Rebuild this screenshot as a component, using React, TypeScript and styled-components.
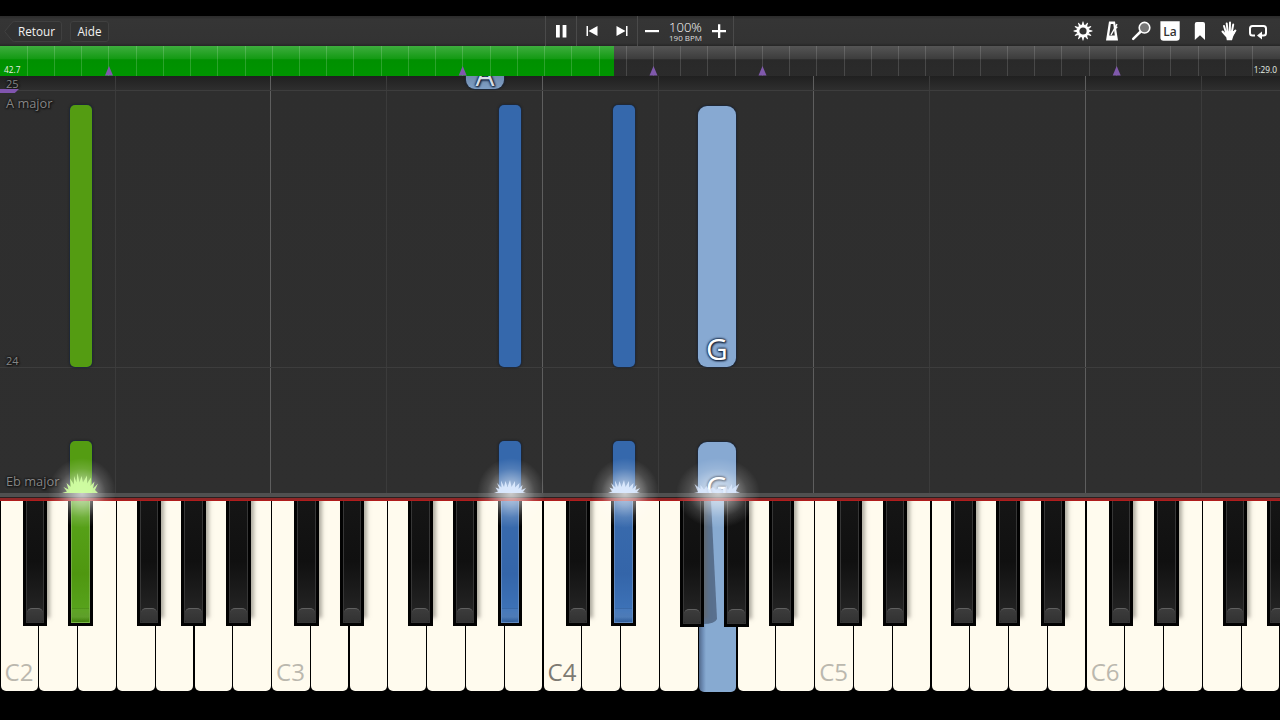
import React from "react";
import styled, { createGlobalStyle } from "styled-components";

const Global = createGlobalStyle`
  html, body { margin: 0; background: #000; }
  body { overflow: hidden; }
  * { box-sizing: border-box; }
`;

const Screen = styled.main`
  width: 1280px;
  height: 720px;
  padding-top: 16px;
  background: #000;
  display: flex;
  flex-direction: column;
  overflow: hidden;
  font-family: "Open Sans", "Noto Sans", sans-serif;
`;

const Toolbar = styled.header`
  height: 30px;
  flex: none;
  display: grid;
  grid-template-columns: 545px 189px 1fr;
  background: linear-gradient(#2b2b2b, #353535 12%, #333 90%, #262626);
  color: #fff;
`;

const Menu = styled.nav`
  display: flex;
  align-items: center;
  padding-left: 4px;
  gap: 8px;
`;

const MenuButton = styled.button`
  height: 21px;
  width: 39px;
  padding: 0;
  border: 1px solid #404040;
  border-radius: 3px;
  background: #313131;
  color: #f2f2f2;
  font: 11.7px "Open Sans", sans-serif;
`;

const BackButton = styled.button`
  height: 21px;
  width: 58px;
  padding: 0;
  border: 0;
  background: none;
  display: grid;
  place-items: center;
  color: #f2f2f2;
  font: 11.7px "Open Sans", sans-serif;
  svg, span { grid-area: 1 / 1; }
  span { padding-left: 7px; }
`;

const Transport = styled.div`
  display: grid;
  grid-template-columns: 31px 61px 96px;
  border-left: 1px solid #4a4a4a;
`;

const Group = styled.div<{ $gap?: number }>`
  display: flex;
  align-items: center;
  justify-content: center;
  gap: ${(p) => p.$gap ?? 0}px;
  border-right: 1px solid #4a4a4a;
`;

const Speed = styled.div`
  display: flex;
  flex-direction: column;
  align-items: center;
  width: 35px;
  padding-top: 2px;
  white-space: nowrap;
  strong { font: 300 13px/11px "Open Sans", sans-serif; color: #fff; }
  small { font: 8px/9px "Open Sans", sans-serif; color: #ddd; }
`;

const Tools = styled.div`
  display: flex;
  align-items: center;
  justify-content: flex-end;
  gap: 7.3px;
  padding-right: 10.7px;
`;

const Timeline = styled.div`
  flex: none;
  height: 30px;
  display: grid;
  grid-template: 30px / 1fr;
  background: linear-gradient(#555, #3d3d3d 42%, #292929 46%, #2b2b2b);
  overflow: hidden;
  > * { grid-area: 1 / 1; }
`;

const Progress = styled.div`
  width: 614px;
  height: 100%;
  background: linear-gradient(#3eae3e, #149a14 42%, #009000 46%, #009400);
`;

const Times = styled.div`
  display: flex;
  justify-content: space-between;
  align-items: flex-end;
  padding: 0 3px 1px 4px;
  font-size: 8.3px;
  line-height: 10px;
  color: #e6f0e6;
`;

const Stage = styled.div`
  position: relative;
  flex: 1;
`;

const Roll = styled.section`
  position: relative;
  height: 417px;
  display: grid;
  grid-template: 417px / 1280px;
  background: linear-gradient(#202020, #2e2e2e 14px, #2f2f2f);
  overflow: hidden;
`;

const Lanes = styled.div`
  grid-area: 1 / 1;
  margin-left: -0.4px;
  display: grid;
  grid-template-columns: repeat(4, 116.364px 155.151px) 116.364px 1fr;
`;

const Lane = styled.div<{ $octaveEnd?: boolean }>`
  border-right: 1px solid ${(p) => (p.$octaveEnd ? "#5e5e5e" : "#3b3b3b")};
`;

const Measures = styled.div`
  grid-area: 1 / 1;
  display: grid;
  grid-template-rows: 15px 277px 125px;
`;

const Measure = styled.div<{ $current?: boolean }>`
  display: flex;
  flex-direction: column;
  justify-content: ${(p) => (p.$current ? "flex-end" : "space-between")};
  padding: 0 0 ${(p) => (p.$current ? 4 : 0)}px 6px;
  border-bottom: ${(p) => (p.$current ? "0" : "1px solid #3d3d3d")};
`;

const Label = styled.span<{ $small?: boolean }>`
  font-size: ${(p) => (p.$small ? 11 : 12.8)}px;
  line-height: 16px;
  margin: ${(p) => (p.$small ? "auto 0 -2px" : "4px 0 0")};
  color: #868686;
  text-shadow: 0 0 2px #111, 0 0 2px #111, 1px 1px 2px #111;
`;

const SectionFlag = styled.i`
  position: absolute;
  left: 0;
  top: 13px;
  width: 19px;
  height: 4px;
  background: #8055ae;
  clip-path: polygon(0 0, 100% 0, 78% 100%, 0 100%);
`;

const Note = styled.div<{ $x: number; $y: number; $w: number; $h: number; $color: string; $cut?: boolean }>`
  position: absolute;
  left: ${(p) => p.$x}px;
  top: ${(p) => p.$y}px;
  width: ${(p) => p.$w}px;
  height: ${(p) => p.$h}px;
  display: flex;
  align-items: flex-end;
  justify-content: center;
  border-radius: ${(p) => (p.$w > 30 ? 9 : 5)}px;
  ${(p) => p.$cut && "border-bottom-left-radius: 0; border-bottom-right-radius: 0;"}
  background: ${(p) => p.$color};
  box-shadow: 0 0 0 1px #1c2a40aa, 0 0 2px 1px #1a1a1a88;
  overflow: hidden;
`;

const NoteName = styled.span<{ $drop?: number; $dim?: boolean }>`
  font-size: 30px;
  line-height: 36px;
  margin-bottom: ${(p) => -(p.$drop ?? 0)}px;
  color: ${(p) => (p.$dim ? "#d6dce4" : "#fff")};
  text-shadow: 0 0 2px #14233c, 0 0 2px #14233c, 1px 1px 2px #14233c, 0 0 3px #14233c;
`;

const Rail = styled.div`
  height: 8px;
  background: linear-gradient(#505050 0 4px, #2a2020 4px 5px, #8f2626 5px 7px, #b01c1c 7px);
`;

const Keyboard = styled.section`
  height: 191px;
  display: grid;
  grid-template: 191px / 1280px;
  background: #000;
  overflow: hidden;
  > * { grid-area: 1 / 1; }
`;

const WhiteKeys = styled.div`
  display: grid;
  grid-template-columns: repeat(33, 1fr);
`;

const WhiteKey = styled.div<{ $down?: boolean; $middle?: boolean }>`
  height: ${(p) => (p.$down ? 191 : 190)}px;
  margin: 0 0.6px;
  padding: 156px 0 0 4px;
  border-radius: 0 0 5px 5px;
  background: ${(p) =>
    p.$down ? "linear-gradient(90deg, #52698a, #6f8fb8 4px, #87aad1 7px, #87aad1)" : "#fffbee"};
  color: ${(p) => (p.$middle ? "#7d7a72" : "#bbb8ae")};
  font-size: 24px;
  line-height: 30px;
  white-space: nowrap;
`;

const BlackKeys = styled.div`
  display: grid;
  grid-template-columns: repeat(5, 271.515px);
`;

const Octave = styled.div`
  display: grid;
  grid-template-columns: 24.5px 24.5px 24.5px 24.5px 24.5px;
  column-gap: 20.3px;
  padding-left: 22.8px;
  > :nth-child(2) { margin-left: 0.8px; margin-right: -0.8px; }
  > :nth-child(n + 3) { margin-left: 24.2px; margin-right: -24.2px; }
`;

const BlackKey = styled.div<{ $lit?: boolean; $low?: boolean }>`
  height: ${(p) => (p.$low ? 126 : 125)}px;
  padding: 0 3px 3px;
  background: #020202;
  box-shadow: ${(p) => (p.$lit ? "none" : "4px -7px 4px -1px #69655b88")};
`;

const KeyTop = styled.div<{ $color?: string }>`
  height: 100%;
  display: flex;
  align-items: flex-end;
  border: 1px solid ${(p) => (p.$color ? "#ffffff33" : "#363636")};
  border-top: 0;
  background: ${(p) => p.$color ?? "linear-gradient(#151515, #101010 50%, #222 88%)"};
`;

const KeyLip = styled.div<{ $lit?: boolean }>`
  width: 100%;
  height: 14px;
  border-radius: ${(p) => (p.$lit ? "0 0 5px 5px" : "5px 5px 2px 2px")};
  border-top: 1px solid ${(p) => (p.$lit ? "transparent" : "#606060")};
  background: ${(p) => (p.$lit ? "linear-gradient(#ffffff0c, #ffffff1c 60%, #00000018)" : "linear-gradient(#3c3c3c, #323232)")};
`;

const PressShade = styled.svg`
  margin-left: 703px;
`;

const Flare = styled.svg<{ $x: number }>`
  position: absolute;
  left: ${(p) => p.$x - 50}px;
  top: 360px;
  pointer-events: none;
`;

const GREEN = "#549c12";
const BLUE = "#3568ac";
const PALE = "#87a9d2";
const GREEN_KEY = "linear-gradient(#5aa51c, #4f9710 60%, #57a21b 88%, #458c0b)";
const BLUE_KEY = "linear-gradient(#3a6cae, #3465a9 60%, #3d72b7 90%, #3466a8)";

// Black keys held down, by octave and position in the octave (C#, D#, F#, G#, A#).
const HELD: Record<string, string> = { "0-1": GREEN_KEY, "1-4": BLUE_KEY, "2-1": BLUE_KEY };

const flames = {
  green:
    "M31 57L36 55.5L32.5 51L37.5 53.5L35.5 47L40 51L39 42.5L43 48.5L43 40L45.5 46.5L46.5 37L48.5 46.5L50.5 40L52 46.5L56 39.5L56 47.5L60 41.5L59.5 50L63.5 45.5L62 52.5L67 47.5L64 54L67 57Z",
  blue:
    "M34 57L38 55.5L35.5 51.5L39.5 53L37 47L41.5 51.5L41 44.5L44 51L45.5 45L47.5 51L50 44L51.5 51L55 45L55 51.5L59.5 47L58.5 53L62.5 49L61.5 54L66 52L63 56L66 57Z",
  pale:
    "M27 57L31 56L27.5 48L33.5 53L33.5 49L37 53.5L39.5 50L42 54L46 51L49 54L53 51L55 54L59.5 50L61 54L65 48L65 53L72.5 47.5L69 55L73 57Z",
};

const Flame = ({ x, kind }: { x: number; kind: keyof typeof flames }) => (
  <Flare $x={x} width="100" height="100" viewBox="0 0 100 100">
    <defs>
      <radialGradient id={`glow${x}`}>
        <stop offset="0" stopColor="#fff" stopOpacity=".7" />
        <stop offset=".35" stopColor="#fff" stopOpacity=".46" />
        <stop offset=".7" stopColor="#fff" stopOpacity=".14" />
        <stop offset="1" stopColor="#fff" stopOpacity="0" />
      </radialGradient>
    </defs>
    <ellipse cx="51" cy="57" rx={kind === "pale" ? 42 : 34} ry="35" fill={`url(#glow${x})`} />
    <path fill={kind === "green" ? "#d0ffa2" : "#dceaff"} fillOpacity={kind === "pale" ? 0.8 : 0.92} d={flames[kind]} />
  </Flare>
);

const App = () => (
  <Screen>
    <Global />
    <Toolbar>
      <Menu>
        <BackButton>
          <svg width="58" height="21" viewBox="0 0 58 21">
            <path d="M.7 10.5L8 1.5Q9 .5 10.5.5H55Q57.5.5 57.5 3V18Q57.5 20.5 55 20.5H10.5Q9 20.5 8 19.5Z" fill="#313131" stroke="#404040" />
          </svg>
          <span>Retour</span>
        </BackButton>
        <MenuButton>Aide</MenuButton>
      </Menu>
      <Transport>
        <Group>
          <svg width="12" height="14" viewBox="0 0 12 14" fill="#fff"><path d="M1 1H4.8V13.4H1ZM7.6 1H11.4V13.4H7.6Z" /></svg>
        </Group>
        <Group $gap={18}>
          <svg width="12" height="12" viewBox="0 0 12 12" fill="#fff"><path d="M.5 1H2V11H.5ZM11.5 1V11L2.5 6Z" /></svg>
          <svg width="12" height="12" viewBox="0 0 12 12" fill="#fff"><path d="M10 1H11.5V11H10ZM.5 1V11L9.5 6Z" /></svg>
        </Group>
        <Group $gap={9}>
          <svg width="14" height="14" viewBox="0 0 14 14" fill="#fff"><path d="M0 6H14V8.2H0Z" /></svg>
          <Speed><strong>100%</strong><small>190 BPM</small></Speed>
          <svg width="14" height="14" viewBox="0 0 14 14" fill="#fff"><path d="M0 6H6V.3H8.3V6H14V8.2H8.3V14H6V8.2H0Z" /></svg>
        </Group>
      </Transport>
      <Tools>
        <svg width="22" height="22" viewBox="0 0 22 22">
          <circle cx="11" cy="11" r="5" fill="none" stroke="#fff" strokeWidth="2.8" />
          {Array.from({ length: 12 }, (_, i) => (
            <path key={i} d="M9.8 5L10.6 1.6H11.4L12.2 5Z" fill="#fff" transform={`rotate(${i * 30} 11 11)`} />
          ))}
        </svg>
        <svg width="22" height="22" viewBox="0 0 22 22">
          <path fill="#fff" fillRule="evenodd" d="M8 1.5H14L17 20.5H5ZM9.8 4L8.2 15.5H13.8L12.3 4Z" />
          <path d="M10 15L16 4.2" stroke="#fff" strokeWidth="1.4" />
          <path d="M13.6 6.4L16.2 7.9" stroke="#fff" strokeWidth="2" />
        </svg>
        <svg width="22" height="22" viewBox="0 0 22 22">
          <circle cx="14.5" cy="7.7" r="5.3" fill="#777" stroke="#fff" strokeWidth="1.6" />
          <path d="M10.2 12L3.2 18.8" stroke="#fff" strokeWidth="2.5" strokeLinecap="round" />
        </svg>
        <svg width="22" height="22" viewBox="0 0 22 22">
          <path d="M1.4 1.2H20.7V17.5Q20.7 20.7 17.5 20.7H4.6Q1.4 20.7 1.4 17.5Z" fill="#fff" />
          <text x="11" y="16.3" textAnchor="middle" fontSize="12" fontFamily="Open Sans" fontWeight="600" fill="#333">La</text>
        </svg>
        <svg width="22" height="22" viewBox="0 0 22 22">
          <path fill="#fff" d="M5.8 4Q5.8 2 7.8 2H14Q16 2 16 4V20L11 15.2L5.8 20Z" />
        </svg>
        <svg width="22" height="22" viewBox="0 0 22 22" fill="none" stroke="#fff" strokeLinecap="round">
          <path fill="#fff" stroke="none" d="M7 11.5L15.4 11L17.2 10Q18 11.5 15.5 15.5L14 20.3H8.8L8.3 17.5L6.5 14Z" />
          <path strokeWidth="2" d="M8 12.5L6 6M9.7 12L8.7 3.4M11.8 12L12 2.6M13.8 12L15.2 4.6M14.5 15L17.4 10.5M8 15.5L4.5 11.5" />
        </svg>
        <svg width="22" height="22" viewBox="0 0 22 22" fill="none" stroke="#fff" strokeWidth="2">
          <path d="M8 15.5H5.5Q3 15.5 3 13V8.5Q3 6 5.5 6H16.5Q19 6 19 8.5V13Q19 15.5 16.5 15.5H14" />
          <path fill="#fff" stroke="none" d="M10 15.5L15 11.5V19.5Z" />
        </svg>
      </Tools>
    </Toolbar>
    <Timeline>
      <Progress />
      <svg width="1280" height="30" viewBox="0 0 1280 30">
        {Array.from({ length: 46 }, (_, i) => (
          <path key={i} d={`M${Math.floor((i + 1) * 27.23) + 0.5} 0V30`} stroke="#fff" strokeOpacity={i < 22 ? 0.17 : 0.14} />
        ))}
        {[109, 462.7, 653.5, 762.5, 1116.7].map((x) => (
          <path key={x} d={`M${x - 4} 29.5L${x} 20L${x + 4} 29.5Z`} fill="#8059ac" />
        ))}
      </svg>
      <Times>
        <span>42.7</span>
        <span>1:29.0</span>
      </Times>
    </Timeline>
    <Stage>
      <Roll>
        <Lanes>
          {Array.from({ length: 9 }, (_, i) => (
            <Lane key={i} $octaveEnd={i % 2 === 1} />
          ))}
        </Lanes>
        <Measures>
          <Measure><Label $small>25</Label></Measure>
          <Measure><Label>A major</Label><Label $small>24</Label></Measure>
          <Measure $current><Label>Eb major</Label></Measure>
        </Measures>
        <SectionFlag />
        <Note $x={466} $y={-40} $w={38} $h={53} $color="linear-gradient(#6c87a8 70%, #7f9fc6)">
          <NoteName $dim $drop={4}>A</NoteName>
        </Note>
        <Note $x={70} $y={29} $w={22} $h={262} $color={GREEN} />
        <Note $x={499} $y={29} $w={22} $h={262} $color={BLUE} />
        <Note $x={613} $y={29} $w={22} $h={262} $color={BLUE} />
        <Note $x={698} $y={30} $w={38} $h={261} $color={PALE}><NoteName>G</NoteName></Note>
        <Note $cut $x={70} $y={365} $w={22} $h={52} $color={GREEN} />
        <Note $cut $x={499} $y={365} $w={22} $h={52} $color={BLUE} />
        <Note $cut $x={613} $y={365} $w={22} $h={52} $color={BLUE} />
        <Note $cut $x={698} $y={366} $w={38} $h={51} $color={PALE}><NoteName $drop={12}>G</NoteName></Note>
      </Roll>
      <Rail />
      <Keyboard>
        <WhiteKeys>
          {Array.from({ length: 33 }, (_, i) => (
            <WhiteKey key={i} $down={i === 18} $middle={i === 14}>
              {i % 7 === 0 ? `C${2 + i / 7}` : ""}
            </WhiteKey>
          ))}
        </WhiteKeys>
        <PressShade width="24" height="126" viewBox="0 0 24 126">
          <path d="M0 0H8L14 118Q12 123 0 123Z" fill="#59708e" />
        </PressShade>
        <BlackKeys>
          {Array.from({ length: 5 }, (_, o) => (
            <Octave key={o}>
              {Array.from({ length: o === 4 ? 4 : 5 }, (_, k) => {
                const color = HELD[`${o}-${k}`];
                return (
                  <BlackKey key={k} $lit={!!color} $low={o === 2 && (k === 2 || k === 3)}>
                    <KeyTop $color={color}><KeyLip $lit={!!color} /></KeyTop>
                  </BlackKey>
                );
              })}
            </Octave>
          ))}
        </BlackKeys>
      </Keyboard>
      <Flame x={81} kind="green" />
      <Flame x={510} kind="blue" />
      <Flame x={624} kind="blue" />
      <Flame x={717} kind="pale" />
    </Stage>
  </Screen>
);

export default App;
